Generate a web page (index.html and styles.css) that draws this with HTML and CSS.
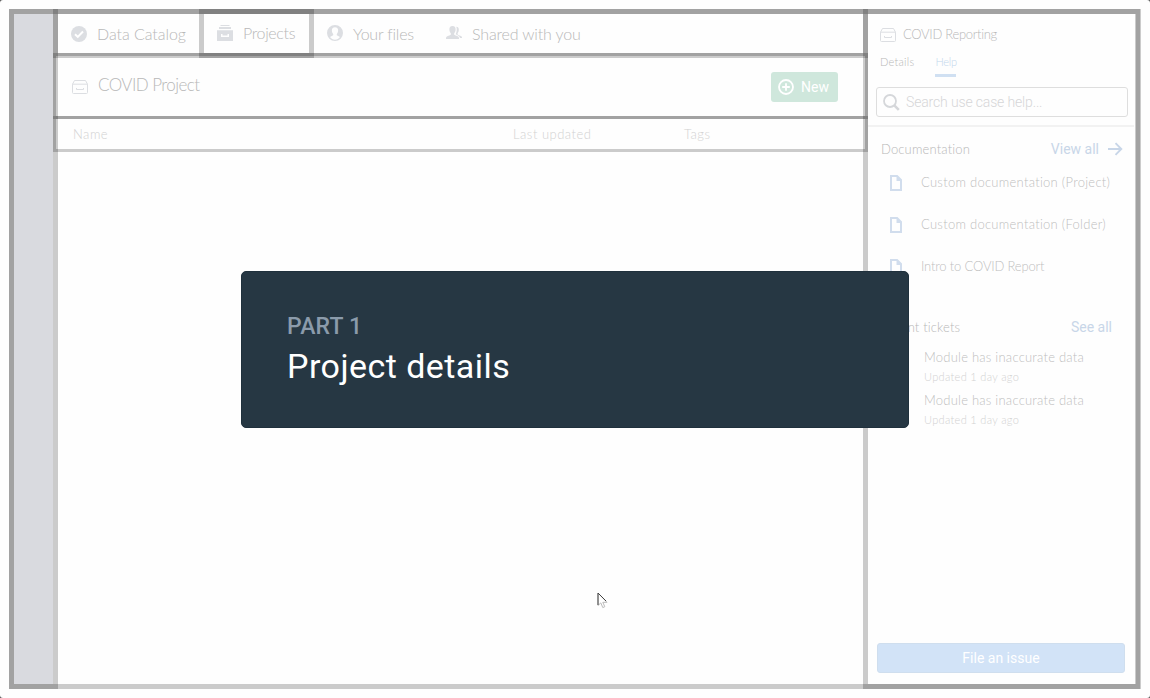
FILE: index.html
```html
<!DOCTYPE html>
<html lang="en">
<head>
<meta charset="utf-8">
<title>COVID Project</title>
<link rel="stylesheet" href="styles.css">
</head>
<body>
<svg class="defs" width="0" height="0">
  <symbol id="project" viewBox="0 0 16 14"><path d="M.5 4.200V12.500a1 1 0 0 0 1 1h13a1 1 0 0 0 1-1V4.200L13.500.5h-11L.5 4.200h15M4.500 8v1.500h7V8" fill="none" stroke="currentColor"/></symbol>
  <symbol id="doc" viewBox="0 0 12 16"><path fill="currentColor" fill-rule="evenodd" d="M0 0h7.500L12 4.500V16H0zM2 2v12h8V6H6.500V2z"/></symbol>
</svg>
<div class="shell">
  <aside class="sidebar"></aside>
  <main class="main">
    <nav class="nav">
      <div class="tab catalog">
        <svg width="16" height="16" viewBox="0 0 16 16"><circle cx="8" cy="8" r="8" fill="currentColor"/><path d="M4 8.200l2.800 2.700L12 5.500" fill="none" stroke="#fff" stroke-width="2"/></svg>
        <span>Data Catalog</span>
      </div>
      <div class="tab projects">
        <svg width="16" height="16" viewBox="0 0 16 16"><path fill="currentColor" fill-rule="evenodd" d="M3.500 0h9v1h-9zM2 2h12v2H2zM0 5.200h16V16H0zM4 9v3h8V9h-1.500v1.500h-5V9z"/></svg>
        <span>Projects</span>
      </div>
      <div class="tab files">
        <svg width="16" height="16" viewBox="0 0 16 16"><path fill="currentColor" fill-rule="evenodd" d="M8 0a8 8 0 1 1 0 16A8 8 0 0 1 8 0zM8 2.200C6 2.200 4.800 3.500 4.900 5.500c0 1.500.5 2.700 1.300 3.500v1.300L3 12a6 6 0 0 0 10 0l-3.200-1.700V9c.8-.8 1.300-2 1.300-3.500C11.200 3.500 10 2.200 8 2.200z"/></svg>
        <span>Your files</span>
      </div>
      <div class="tab shared">
        <svg width="16" height="14" viewBox="0 0 16 14"><path fill="currentColor" d="M6.500 0C8.800 0 9.800 1.500 9.600 3.700c-.1 1.600-.6 2.700-1.400 3.500v1.500c1.800 1 4.600 1.300 4.800 3V13H0v-1.300c.2-1.700 3-2 4.800-3V7.200C4 6.400 3.500 5.300 3.400 3.700 3.200 1.500 4.200 0 6.500 0zM10.300.8c1.900 0 2.700 1.300 2.500 3.200-.1 1.500-.6 2.500-1.200 3.200v1.200c1.500 1 4.200 1.200 4.400 2.900V12h-2c-.2-2.300-2.600-2.600-4.300-3.800.9-2 1.600-4.900.6-7.400z"/></svg>
        <span>Shared with you</span>
      </div>
    </nav>
    <header class="head">
      <svg class="pale" width="16" height="14"><use href="#project"/></svg>
      <h1>COVID Project</h1>
      <button class="new">
        <svg width="16" height="16" viewBox="0 0 16 16"><g fill="none" stroke="#fff" stroke-width="1.800"><circle cx="8" cy="8" r="7"/><path d="M8 4.200v7.600M4.200 8h7.600"/></g></svg>
        <span>New</span>
      </button>
    </header>
    <div class="columns"><span class="c-name">Name</span><span class="c-upd">Last updated</span><span class="c-tags">Tags</span></div>
  </main>
  <aside class="panel">
    <div class="panel-title"><svg class="pale" width="16" height="14"><use href="#project"/></svg><span>COVID Reporting</span></div>
    <div class="panel-tabs"><span class="details">Details</span><span class="help">Help</span></div>
    <div class="search">
      <svg width="17" height="17" viewBox="0 0 17 17"><g fill="none" stroke="currentColor"><circle cx="7" cy="7" r="6" stroke-width="1.800"/><path d="M11.300 11.300l4.500 4.500" stroke-width="2.600"/></g></svg>
      <span>Search use case help...</span>
    </div>
    <div class="section docs"><span class="label">Documentation</span><span class="link">View all</span>
      <svg class="arrow" width="15" height="14" viewBox="0 0 15 14"><path d="M0 7h13M7.500 1.200L13.300 7l-5.800 5.800" fill="none" stroke="currentColor" stroke-width="1.900"/></svg>
    </div>
    <div class="doc"><svg width="12" height="16"><use href="#doc"/></svg><span class="d1">Custom documentation (Project)</span></div>
    <div class="doc"><svg width="12" height="16"><use href="#doc"/></svg><span class="d2">Custom documentation (Folder)</span></div>
    <div class="doc"><svg width="12" height="16"><use href="#doc"/></svg><span class="d3">Intro to COVID Report</span></div>
    <div class="section tickets"><span class="label">Recent tickets</span><span class="link">See all</span></div>
    <div class="ticket"><div class="t-name">Module has inaccurate data</div><div class="t-date">Updated 1 day ago</div></div>
    <div class="ticket"><div class="t-name">Module has inaccurate data</div><div class="t-date">Updated 1 day ago</div></div>
    <button class="issue">File an issue</button>
  </aside>
</div>
<section class="card"><div class="part">PART 1</div><div class="title">Project details</div></section>
<svg class="cursor" width="11" height="18" viewBox="0 0 11 18"><path d="M1 1v12.500l2.800-2.600 2 4.700 2-.9-2-4.400H10z" fill="#fff" stroke="#bbb"/><path d="M1 13V1l8 8" fill="none" stroke="#444"/></svg>
</body>
</html>
```
FILE: styles.css
```css
* { box-sizing: border-box; }
html { background: #555; height: 100%; }
body { margin: 0; width: 1150px; height: 698px; padding: 9px; background: #fefefe; border-radius: 3px; overflow: hidden; position: relative; font-family: Lato, "Open Sans", sans-serif; font-weight: 300; color: #b8b8b8; white-space: nowrap; }
svg { flex: none; display: block; }
.defs { position: absolute; }
button { border: 0; padding: 0; font: 400 14px Roboto, sans-serif; color: #fff; }

/* Translucent wireframe outlines darken where neighbouring frames share an edge. */
.shell, .sidebar, .nav, .projects, .panel { outline: 5px solid rgba(0, 0, 0, .2); outline-offset: -5px; }
.head, .columns { outline: 3px solid rgba(0, 0, 0, .2); outline-offset: -3px; }

.shell { width: 1132px; height: 680px; display: flex; }
.sidebar { width: 49px; padding: 5px; background: #d9dadf content-box; }
.main { width: 815px; margin-left: -5px; }
.nav { height: 49px; display: flex; }
.tab { display: flex; align-items: center; font-size: 16px; height: 49px; }
.tab svg { color: #dcdee2; }
.catalog { width: 146px; padding-left: 18px; gap: 10px; }
.catalog span { letter-spacing: -.05px; }
.projects { width: 115px; padding: 0 0 2px 18px; gap: 10px; letter-spacing: -.35px; }
.files { padding: 0 0 1px 13px; gap: 10px; width: 132px; letter-spacing: -.2px; }
.shared { padding-bottom: 1px; gap: 10px; letter-spacing: -.15px; }

.head { height: 66px; margin-top: -5px; display: flex; align-items: center; padding: 2px 30px 0 19px; }
.pale { color: #dcdee2; }
h1 { margin: -5px 0 0 10px; font-size: 17px; font-weight: 300; letter-spacing: -.55px; flex: 1; }
.new { width: 67px; height: 30px; border-radius: 3px; background: #cfe7dc; display: flex; align-items: center; padding-left: 7px; gap: 7px; }
.columns { height: 36px; margin-top: -3px; display: flex; align-items: center; font-size: 13px; padding-left: 20px; color: #d2d2d2; letter-spacing: .5px; }
.c-name { width: 440px; }
.c-upd { width: 171px; }

.panel { width: 277px; margin-left: -5px; display: flex; flex-direction: column; padding: 14px 15px 16px 13px; }
.panel-title { display: flex; align-items: center; gap: 7px; padding-left: 4px; height: 22px; font-size: 13px; letter-spacing: -.3px; }
.panel-title svg { margin-top: 2px; }
.panel-tabs { display: flex; gap: 21px; padding-left: 4px; height: 32px; margin-bottom: 10px; font-size: 11px; line-height: 34px; }
.details { letter-spacing: .25px; }
.help { width: 21px; color: #c2d6ec; letter-spacing: -.2px; border-bottom: 3px solid #d0e0f2; }
.search { flex: none; width: 252px; height: 30px; border: 1px solid #dedede; border-radius: 3px; display: flex; align-items: center; padding-left: 6px; gap: 6px; font: 300 14px Roboto, sans-serif; color: #d6d6d8; }
.search svg { color: #d5d7da; }
.search span { letter-spacing: -.15px; }
.section { display: flex; align-items: center; font-size: 13px; padding-left: 4px; letter-spacing: .15px; }
.label { flex: 1; }
.link { font: 400 14px Roboto, sans-serif; letter-spacing: 0; color: #c8d6e8; }
.docs { margin: 8px -9px 0 -8px; padding: 0 11px 2px 13px; height: 48px; border-top: 2px solid #f2f2f2; }
.arrow { color: #c8d6e8; margin-left: 9px; }
.doc { display: flex; align-items: center; height: 42px; padding-left: 14px; font-size: 13px; color: #bfbfbf; }
.docs + .doc { margin-top: -12px; }
.doc svg { color: #d1dded; margin: 2px 19px 0 0; }
.d1, .d2 { letter-spacing: .28px; }
.d3 { letter-spacing: -.17px; }
.tickets { height: 36px; margin-top: 22px; padding-right: 13px; }
.ticket { padding-left: 48px; height: 43px; }
.t-name { height: 21px; font-size: 13px; line-height: 25px; letter-spacing: .23px; color: #bfbfbf; }
.t-date { font-size: 11px; line-height: 21px; letter-spacing: .32px; color: #d2d2d2; }
.issue { margin: auto 0 0 1px; height: 30px; width: 248px; border-radius: 3px; background: #d2e3f7; border: 1px solid #cfdeee; }

.card { position: absolute; left: 241px; top: 271px; width: 668px; height: 157px; border-radius: 5px; background: #263743; border: 1px solid #1f303c; padding: 40px 45px; font-family: Roboto, sans-serif; }
.part { font-weight: 500; font-size: 23px; line-height: 30px; letter-spacing: .2px; color: #8b9bab; }
.title { font-weight: 400; font-size: 34px; line-height: 48px; letter-spacing: .45px; color: #fff; }
.cursor { position: absolute; left: 597px; top: 592px; }
```
